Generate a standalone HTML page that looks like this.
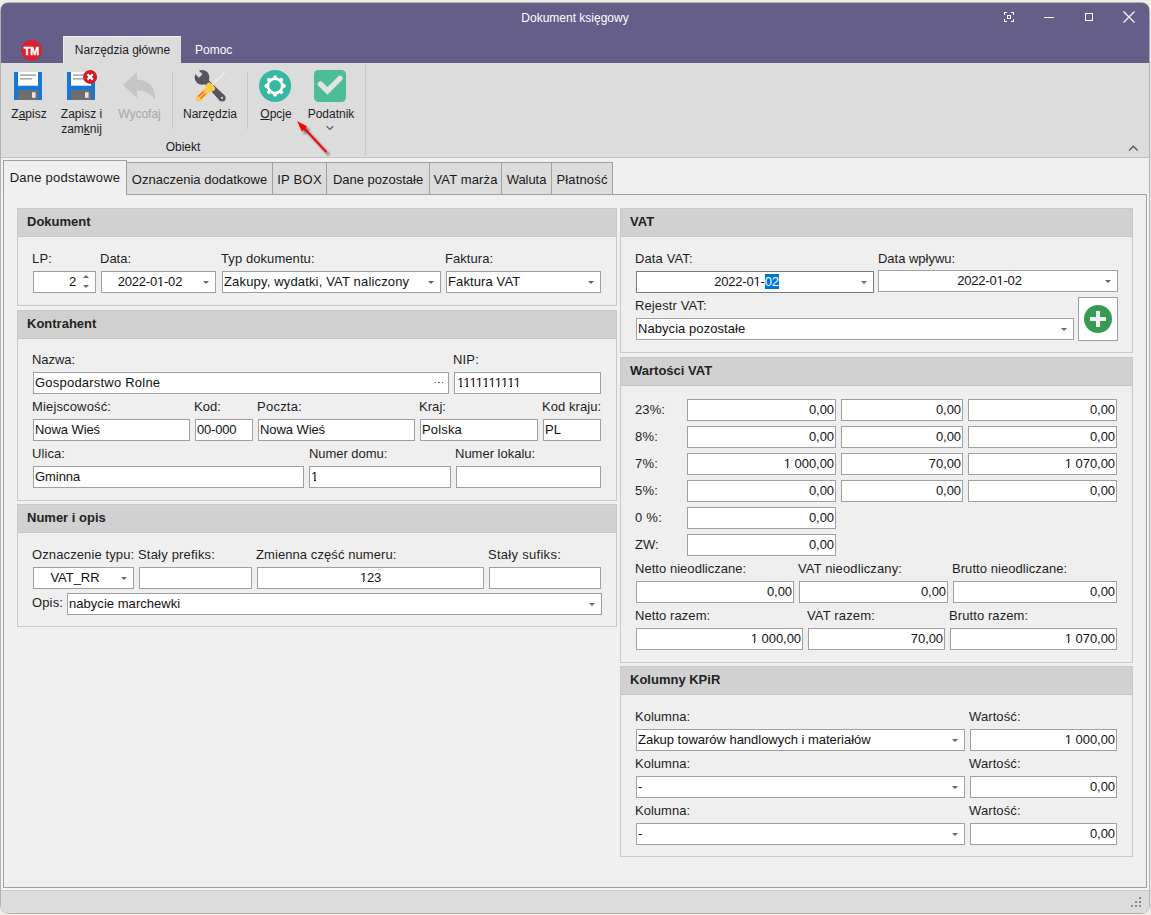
<!DOCTYPE html><html><head><meta charset="utf-8"><style>
*{margin:0;padding:0;box-sizing:border-box}
html,body{width:1151px;height:915px;overflow:hidden;background:#efede4;font-family:"Liberation Sans",sans-serif;color:#1a1a1a;position:relative}
.a{position:absolute}
.lbl{position:absolute;font-size:13px;line-height:15px;white-space:nowrap;color:#1e1e1e}
.fld{position:absolute;background:#fff;border:1px solid #a0a0a0}
.fld .t{position:absolute;top:2px;font-size:13px;line-height:15px;white-space:nowrap;color:#111}
.fld .dd{position:absolute;right:6px;top:9px;width:0;height:0;border-left:3px solid transparent;border-right:3px solid transparent;border-top:3px solid #666}
.fld .su{position:absolute;right:6px;top:3px;width:0;height:0;border-left:3px solid transparent;border-right:3px solid transparent;border-bottom:3px solid #666}
.fld .sd{position:absolute;right:6px;top:13px;width:0;height:0;border-left:3px solid transparent;border-right:3px solid transparent;border-top:3px solid #666}
.fld .dots{position:absolute;right:5px;top:9px;width:8px;height:2px;display:flex;justify-content:space-between}.fld .dots b{display:block;width:1.2px;height:1.2px;background:#555}
.o{font-style:normal;position:relative}.o::before,.o::after{content:"";position:absolute;top:10.7px;height:1.6px;background:#fff}.o::before{left:0;width:3.2px}.o::after{left:4.5px;width:3px}
.grp{position:absolute;border:1px solid #c9c9c9;background:#efefef}
.gh{position:absolute;left:0;top:0;width:100%;background:#d1d1d1;font-weight:bold;font-size:13px;line-height:15px;padding:5px 0 0 9px;color:#222;border-bottom:1px solid #c6c6c6}
.tab{position:absolute;height:33px;background:#dcdcdc;border:1px solid #a0a0a0;font-size:13px;line-height:15px;padding-top:8px;white-space:nowrap;color:#1a1a1a;text-align:center;letter-spacing:0.15px}
.rl{position:absolute;font-size:12px;line-height:14px;white-space:nowrap;color:#1c1c1c;text-align:center}
</style></head><body>
<div class="a" style="left:1150px;top:20px;width:1px;height:895px;background:#e6e6e6"></div>
<div class="a" style="left:0;top:2px;width:1150px;height:912px;background:#f0f0f0;border:1px solid #b2b2b2;border-radius:9px"></div>
<div class="a" style="left:1px;top:3px;width:1148px;height:60px;background:#655e88;border-radius:6px 6px 0 0"></div>
<div class="a" style="left:0;top:11px;width:1150px;text-align:center;color:#fff;font-size:12px;line-height:14px">Dokument księgowy</div>
<div class="a" style="left:1px;top:63px;width:1148px;height:95px;background:#dcdcdc;border-bottom:1px solid #c2c2c2"></div>
<div class="a" style="left:63px;top:36px;width:118px;height:27px;background:#dcdcdc;border-top:1px solid #ececec;border-left:1px solid #ececec"></div>
<div class="rl" style="left:63px;top:43px;width:119px">Narzędzia główne</div>
<div class="rl" style="left:195px;top:43px;color:#fff">Pomoc</div>
<div class="a" style="left:1px;top:890px;width:1148px;height:23px;background:#dcdcdc;border-top:1px solid #c8c8c8;border-radius:0 0 7px 7px"></div>
<svg class="a" style="left:0;top:0" width="1151" height="160" viewBox="0 0 1151 160"><g stroke="#fff" stroke-width="1" fill="none" shape-rendering="crispEdges"><path d="M1004.5 15V12.5H1007M1011 12.5H1013.5V15M1013.5 19V21.5H1011M1007 21.5H1004.5V19"/><rect x="1007.5" y="15.5" width="2.5" height="2.5"/><path d="M1044 17.5H1054"/><rect x="1085.5" y="13.5" width="7" height="7"/></g><path d="M1123.5 11.5L1134.5 22.5M1134.5 11.5L1123.5 22.5" stroke="#fff" stroke-width="1.1" fill="none"/><circle cx="31.5" cy="50.4" r="10.4" fill="#df1f29"/><g><rect x="14" y="72" width="28" height="28" fill="#1877d6"/><rect x="18" y="72" width="20" height="13.7" fill="#fff"/><rect x="20" y="74.3" width="16" height="1.6" fill="#a9a9a9"/><rect x="20" y="78" width="12" height="1.6" fill="#a9a9a9"/><rect x="18" y="90" width="20" height="10" fill="#6e6e6e"/><rect x="32" y="92.2" width="3.6" height="5.6" fill="#e4e4e4"/></g><g transform="translate(53,0)"><rect x="14" y="72" width="28" height="28" fill="#1877d6"/><rect x="18" y="72" width="20" height="13.7" fill="#fff"/><rect x="20" y="74.3" width="16" height="1.6" fill="#a9a9a9"/><rect x="20" y="78" width="12" height="1.6" fill="#a9a9a9"/><rect x="18" y="90" width="20" height="10" fill="#6e6e6e"/><rect x="32" y="92.2" width="3.6" height="5.6" fill="#e4e4e4"/></g><circle cx="90.1" cy="76.9" r="7" fill="#d71920"/><path d="M87.4 74.2L92.8 79.6M92.8 74.2L87.4 79.6" stroke="#fff" stroke-width="2.2"/><path d="M123 85L137 72V79.5C148 80 156 87 155 100C151 93 145 90.5 137 90.5V98Z" fill="#c6c6c6"/><rect x="172" y="72" width="1" height="57" fill="#c6c6c6"/><rect x="247" y="72" width="1" height="57" fill="#c6c6c6"/><rect x="365" y="64" width="1" height="92" fill="#c8c8c8"/><g transform="translate(185,66)"><defs><mask id="wm"><rect x="0" y="0" width="50" height="40" fill="#fff"/><rect x="-2.5" y="-13" width="5" height="11.2" fill="#000" transform="translate(17,11.3) rotate(-45)"/></mask></defs><g mask="url(#wm)" fill="#55545f"><circle cx="17" cy="11.3" r="7.4"/></g><path d="M18.8 9.5L39.6 29.4L34.6 34.4L15.2 13.1Z" fill="#55545f"/><circle cx="37.1" cy="31.9" r="3.5" fill="#55545f"/><circle cx="37" cy="31.8" r="1.1" fill="#e6e6e6"/><path d="M39.3 6.6L26.5 19.3" stroke="#e4ebee" stroke-width="1.8" stroke-linecap="round"/><path d="M24.2 19.6L27 22.4" stroke="#fbc93f" stroke-width="6" stroke-linecap="round"/><path d="M22.5 24L14 32.5" stroke="#fccb45" stroke-width="6.2" stroke-linecap="round"/><path d="M13.3 30.6L18.8 25.6M15.4 32.5L20.6 27.6" stroke="#f0534c" stroke-width="1.3"/></g><circle cx="275.1" cy="85.9" r="16" fill="#35b8a1"/><g fill="#fff"><rect x="273.3" y="75.4" width="3.6" height="3.8" rx="1.2" transform="rotate(0 275.1 85.9)"/><rect x="273.3" y="75.4" width="3.6" height="3.8" rx="1.2" transform="rotate(45 275.1 85.9)"/><rect x="273.3" y="75.4" width="3.6" height="3.8" rx="1.2" transform="rotate(90 275.1 85.9)"/><rect x="273.3" y="75.4" width="3.6" height="3.8" rx="1.2" transform="rotate(135 275.1 85.9)"/><rect x="273.3" y="75.4" width="3.6" height="3.8" rx="1.2" transform="rotate(180 275.1 85.9)"/><rect x="273.3" y="75.4" width="3.6" height="3.8" rx="1.2" transform="rotate(225 275.1 85.9)"/><rect x="273.3" y="75.4" width="3.6" height="3.8" rx="1.2" transform="rotate(270 275.1 85.9)"/><rect x="273.3" y="75.4" width="3.6" height="3.8" rx="1.2" transform="rotate(315 275.1 85.9)"/></g><circle cx="275.1" cy="85.9" r="7.2" fill="none" stroke="#fff" stroke-width="2.7"/><rect x="314" y="70" width="32" height="32" rx="4.5" fill="#4dbd95"/><path d="M320.4 84L327.4 91L340 78.4" stroke="#e2e2e2" stroke-width="5.4" fill="none" stroke-linecap="round" stroke-linejoin="miter"/><path d="M326.6 126.3L329.9 129.4L333.2 126.3" stroke="#5b5b6c" stroke-width="1.2" fill="none"/><path d="M1129 150.5L1133.3 146.2L1137.6 150.5" stroke="#555" stroke-width="1.3" fill="none"/></svg>
<div class="a" style="left:21px;top:45px;width:21px;text-align:center;color:#fff;font-weight:bold;font-size:10.8px;line-height:12px;-webkit-text-stroke:0.35px #fff">TM</div>
<div class="rl" style="left:9px;top:107px;width:40px;line-height:15px">Z<u>a</u>pisz</div>
<div class="rl" style="left:59px;top:107px;width:45px;line-height:15px">Zapisz i<br>zam<u>k</u>nij</div>
<div class="rl" style="left:117px;top:107px;width:45px;color:#a8a8a8">Wycofaj</div>
<div class="rl" style="left:180px;top:107px;width:60px">Narzędzia</div>
<div class="rl" style="left:256px;top:107px;width:40px"><u>O</u>pcje</div>
<div class="rl" style="left:303px;top:107px;width:56px">Podatnik</div>
<div class="rl" style="left:155px;top:140px;width:56px">Obiekt</div>
<svg class="a" style="left:280px;top:110px" width="70" height="60" viewBox="280 110 70 60"><defs><filter id="sh" x="-50%" y="-50%" width="200%" height="200%"><feGaussianBlur stdDeviation="1.2"/></filter></defs><g filter="url(#sh)" opacity="0.6"><path d="M305 129L329 155" stroke="#333" stroke-width="2.4"/><path d="M300 124L310 129.6L304.8 134.5Z" fill="#333"/></g><path d="M303 127L326.4 152.1" stroke="#ff0000" stroke-width="2"/><path d="M297.1 121.1L307.2 126.6L301.8 131.5Z" fill="#ff0000"/></svg>
<svg class="a" style="left:1125px;top:893px" width="20" height="18" viewBox="1125 893 20 18" shape-rendering="crispEdges" fill="#8a8a8a"><rect x="1139" y="897" width="2" height="2"/><rect x="1135" y="901" width="2" height="2"/><rect x="1139" y="901" width="2" height="2"/><rect x="1131" y="905" width="2" height="2"/><rect x="1135" y="905" width="2" height="2"/><rect x="1139" y="905" width="2" height="2"/></svg>
<div class="a" style="left:1px;top:194px;width:1148px;height:696px;background:#f6f6f6"></div>
<div class="a" style="left:3px;top:194px;width:1144px;height:694px;border:1px solid #a0a0a0;background:#f0f0f0"></div>
<div class="tab" style="left:3px;top:160px;width:124px;height:35px;background:#f0f0f0;border-color:#a0a0a0;border-bottom:none;padding-top:9px;letter-spacing:0.25px">Dane podstawowe</div>
<div class="tab" style="left:127px;top:162px;width:146px;height:32px;border-left:none;border-bottom:none;padding-top:9px;letter-spacing:0.010px;">Oznaczenia dodatkowe</div>
<div class="tab" style="left:273px;top:162px;width:54px;height:32px;border-left:none;border-bottom:none;padding-top:9px;letter-spacing:0.267px;">IP BOX</div>
<div class="tab" style="left:327px;top:162px;width:103px;height:32px;border-left:none;border-bottom:none;padding-top:9px;letter-spacing:-0.007px;">Dane pozostałe</div>
<div class="tab" style="left:430px;top:162px;width:72px;height:32px;border-left:none;border-bottom:none;padding-top:9px;letter-spacing:0.126px;">VAT marża</div>
<div class="tab" style="left:502px;top:162px;width:50px;height:32px;border-left:none;border-bottom:none;padding-top:9px;letter-spacing:-0.065px;">Waluta</div>
<div class="tab" style="left:552px;top:162px;width:61px;height:32px;border-left:none;border-bottom:none;padding-top:9px;letter-spacing:0.150px;">Płatność</div>
<div class="grp" style="left:17px;top:208px;width:600px;height:98px"><div class="gh" style="height:28px">Dokument</div></div>
<div class="lbl" style="left:32px;top:251px;letter-spacing:0.167px;">LP:</div>
<div class="lbl" style="left:100px;top:251px;letter-spacing:0.000px;">Data:</div>
<div class="lbl" style="left:221px;top:251px;letter-spacing:0.079px;">Typ dokumentu:</div>
<div class="lbl" style="left:445px;top:251px;letter-spacing:0.062px;">Faktura:</div>
<div class="fld " style="left:33px;top:271px;width:63px;height:22px;"><span class="t" style="right:19px;letter-spacing:-0.200px;">2</span><i class="su"></i><i class="sd"></i></div>
<div class="fld " style="left:101px;top:271px;width:115px;height:22px;"><span class="t" style="left:0;right:17px;text-align:center;letter-spacing:-0.220px;">2022-0<i class="o">1</i>-02</span><i class="dd"></i></div>
<div class="fld " style="left:222px;top:271px;width:219px;height:22px;"><span class="t" style="left:1px;letter-spacing:0.162px;">Zakupy, wydatki, VAT naliczony</span><i class="dd"></i></div>
<div class="fld " style="left:446px;top:271px;width:155px;height:22px;"><span class="t" style="left:1px;letter-spacing:0.112px;">Faktura VAT</span><i class="dd"></i></div>
<div class="grp" style="left:17px;top:310px;width:600px;height:191px"><div class="gh" style="height:28px">Kontrahent</div></div>
<div class="lbl" style="left:32px;top:352px;letter-spacing:-0.050px;">Nazwa:</div>
<div class="lbl" style="left:453px;top:352px;letter-spacing:0.175px;">NIP:</div>
<div class="fld " style="left:33px;top:372px;width:416px;height:22px;"><span class="t" style="left:1px;letter-spacing:0.217px;">Gospodarstwo Rolne</span><i class="dots"><b></b><b></b><b></b></i></div>
<div class="fld " style="left:454px;top:372px;width:147px;height:22px;"><span class="t" style="left:2px;letter-spacing:-0.95px;"><i class="o">1</i><i class="o">1</i><i class="o">1</i><i class="o">1</i><i class="o">1</i><i class="o">1</i><i class="o">1</i><i class="o">1</i><i class="o">1</i><i class="o">1</i></span></div>
<div class="lbl" style="left:32px;top:399px;letter-spacing:0.150px;">Miejscowość:</div>
<div class="lbl" style="left:194px;top:399px;letter-spacing:0.075px;">Kod:</div>
<div class="lbl" style="left:257px;top:399px;letter-spacing:0.243px;">Poczta:</div>
<div class="lbl" style="left:419px;top:399px;letter-spacing:0.060px;">Kraj:</div>
<div class="lbl" style="left:542px;top:399px;letter-spacing:0.060px;">Kod kraju:</div>
<div class="fld " style="left:33px;top:419px;width:157px;height:22px;"><span class="t" style="left:1px;letter-spacing:-0.078px;">Nowa Wieś</span></div>
<div class="fld " style="left:195px;top:419px;width:58px;height:22px;"><span class="t" style="left:1px;letter-spacing:-0.217px;">00-000</span></div>
<div class="fld " style="left:258px;top:419px;width:157px;height:22px;"><span class="t" style="left:1px;letter-spacing:-0.078px;">Nowa Wieś</span></div>
<div class="fld " style="left:420px;top:419px;width:118px;height:22px;"><span class="t" style="left:1px;letter-spacing:0.167px;">Polska</span></div>
<div class="fld " style="left:543px;top:419px;width:58px;height:22px;"><span class="t" style="left:1px;letter-spacing:0.050px;">PL</span></div>
<div class="lbl" style="left:32px;top:446px;letter-spacing:0.083px;">Ulica:</div>
<div class="lbl" style="left:309px;top:446px;letter-spacing:-0.045px;">Numer domu:</div>
<div class="lbl" style="left:455px;top:446px;letter-spacing:0.000px;">Numer lokalu:</div>
<div class="fld " style="left:33px;top:466px;width:271px;height:22px;"><span class="t" style="left:1px;letter-spacing:-0.067px;">Gminna</span></div>
<div class="fld " style="left:309px;top:466px;width:142px;height:22px;"><span class="t" style="left:1px;letter-spacing:-0.200px;"><i class="o">1</i></span></div>
<div class="fld " style="left:456px;top:466px;width:145px;height:22px;"></div>
<div class="grp" style="left:17px;top:504px;width:600px;height:123px"><div class="gh" style="height:28px">Numer i opis</div></div>
<div class="lbl" style="left:32px;top:547px;letter-spacing:0.112px;">Oznaczenie typu:</div>
<div class="lbl" style="left:138px;top:547px;letter-spacing:0.193px;">Stały prefiks:</div>
<div class="lbl" style="left:256px;top:547px;letter-spacing:0.081px;">Zmienna część numeru:</div>
<div class="lbl" style="left:488px;top:547px;letter-spacing:0.285px;">Stały sufiks:</div>
<div class="fld " style="left:33px;top:567px;width:101px;height:22px;"><span class="t" style="left:0;right:17px;text-align:center;letter-spacing:-0.045px;">VAT_RR</span><i class="dd"></i></div>
<div class="fld " style="left:139px;top:567px;width:113px;height:22px;"></div>
<div class="fld " style="left:257px;top:567px;width:227px;height:22px;"><span class="t" style="left:0;right:0px;text-align:center;letter-spacing:-0.200px;"><i class="o">1</i>23</span></div>
<div class="fld " style="left:489px;top:567px;width:112px;height:22px;"></div>
<div class="lbl" style="left:32px;top:595px;letter-spacing:0.140px;">Opis:</div>
<div class="fld " style="left:67px;top:593px;width:535px;height:22px;"><span class="t" style="left:1px;letter-spacing:0.041px;">nabycie marchewki</span><i class="dd"></i></div>
<div class="grp" style="left:620px;top:208px;width:513px;height:145px"><div class="gh" style="height:28px">VAT</div></div>
<div class="lbl" style="left:635px;top:251px;letter-spacing:0.126px;">Data VAT:</div>
<div class="lbl" style="left:878px;top:251px;letter-spacing:-0.017px;">Data wpływu:</div>
<div class="fld " style="left:636px;top:271px;width:238px;height:22px;border-color:#7a7a7a"><span class="t" style="left:0;right:17px;text-align:center;letter-spacing:-0.220px;">2022-0<i class="o">1</i>-<span style="background:#0078d7;color:#fff">02</span></span><i class="dd"></i></div>
<div class="fld " style="left:878px;top:270px;width:240px;height:22px;"><span class="t" style="left:0;right:17px;text-align:center;letter-spacing:-0.220px;">2022-0<i class="o">1</i>-02</span><i class="dd"></i></div>
<div class="lbl" style="left:635px;top:298px;letter-spacing:0.120px;">Rejestr VAT:</div>
<div class="fld " style="left:636px;top:318px;width:438px;height:22px;"><span class="t" style="left:1px;letter-spacing:0.059px;">Nabycia pozostałe</span><i class="dd"></i></div>
<div class="a" style="left:1078px;top:297px;width:40px;height:44px;border:1px solid #a0a0a0;background:#fff"></div>
<div class="a" style="left:1084px;top:304.7px;width:28px;height:28px;border-radius:50%;background:#359a52"></div>
<div class="a" style="left:1090px;top:316.8px;width:16px;height:4.4px;background:#f0f0f0"></div>
<div class="a" style="left:1096px;top:310.8px;width:4px;height:16px;background:#f0f0f0"></div>
<div class="grp" style="left:620px;top:357px;width:513px;height:306px"><div class="gh" style="height:28px">Wartości VAT</div></div>
<div class="lbl" style="left:635px;top:402px;letter-spacing:0.100px;">23%:</div>
<div class="fld num" style="left:687px;top:399px;width:149px;height:22px;"><span class="t" style="right:1px;letter-spacing:-0.050px;">0,00</span></div>
<div class="fld num" style="left:841px;top:399px;width:122px;height:22px;"><span class="t" style="right:1px;letter-spacing:-0.050px;">0,00</span></div>
<div class="fld num" style="left:968px;top:399px;width:149px;height:22px;"><span class="t" style="right:1px;letter-spacing:-0.050px;">0,00</span></div>
<div class="lbl" style="left:635px;top:429px;letter-spacing:0.200px;">8%:</div>
<div class="fld num" style="left:687px;top:426px;width:149px;height:22px;"><span class="t" style="right:1px;letter-spacing:-0.050px;">0,00</span></div>
<div class="fld num" style="left:841px;top:426px;width:122px;height:22px;"><span class="t" style="right:1px;letter-spacing:-0.050px;">0,00</span></div>
<div class="fld num" style="left:968px;top:426px;width:149px;height:22px;"><span class="t" style="right:1px;letter-spacing:-0.050px;">0,00</span></div>
<div class="lbl" style="left:635px;top:456px;letter-spacing:0.200px;">7%:</div>
<div class="fld num" style="left:687px;top:453px;width:149px;height:22px;"><span class="t" style="right:1px;letter-spacing:-0.050px;"><i class="o">1</i> 000,00</span></div>
<div class="fld num" style="left:841px;top:453px;width:122px;height:22px;"><span class="t" style="right:1px;letter-spacing:-0.080px;">70,00</span></div>
<div class="fld num" style="left:968px;top:453px;width:149px;height:22px;"><span class="t" style="right:1px;letter-spacing:-0.050px;"><i class="o">1</i> 070,00</span></div>
<div class="lbl" style="left:635px;top:483px;letter-spacing:0.200px;">5%:</div>
<div class="fld num" style="left:687px;top:480px;width:149px;height:22px;"><span class="t" style="right:1px;letter-spacing:-0.050px;">0,00</span></div>
<div class="fld num" style="left:841px;top:480px;width:122px;height:22px;"><span class="t" style="right:1px;letter-spacing:-0.050px;">0,00</span></div>
<div class="fld num" style="left:968px;top:480px;width:149px;height:22px;"><span class="t" style="right:1px;letter-spacing:-0.050px;">0,00</span></div>
<div class="lbl" style="left:635px;top:510px;letter-spacing:0.250px;">0 %:</div>
<div class="fld num" style="left:687px;top:507px;width:149px;height:22px;"><span class="t" style="right:1px;letter-spacing:-0.050px;">0,00</span></div>
<div class="lbl" style="left:635px;top:537px;letter-spacing:0.068px;">ZW:</div>
<div class="fld num" style="left:687px;top:534px;width:149px;height:22px;"><span class="t" style="right:1px;letter-spacing:-0.050px;">0,00</span></div>
<div class="lbl" style="left:635px;top:561px;letter-spacing:0.037px;">Netto nieodliczane:</div>
<div class="lbl" style="left:798px;top:561px;letter-spacing:0.126px;">VAT nieodliczany:</div>
<div class="lbl" style="left:952px;top:561px;letter-spacing:0.055px;">Brutto nieodliczane:</div>
<div class="fld num" style="left:636px;top:581px;width:158px;height:22px;"><span class="t" style="right:1px;letter-spacing:-0.050px;">0,00</span></div>
<div class="fld num" style="left:799px;top:581px;width:149px;height:22px;"><span class="t" style="right:1px;letter-spacing:-0.050px;">0,00</span></div>
<div class="fld num" style="left:953px;top:581px;width:164px;height:22px;"><span class="t" style="right:1px;letter-spacing:-0.050px;">0,00</span></div>
<div class="lbl" style="left:635px;top:608px;letter-spacing:0.067px;">Netto razem:</div>
<div class="lbl" style="left:807px;top:608px;letter-spacing:0.153px;">VAT razem:</div>
<div class="lbl" style="left:949px;top:608px;letter-spacing:0.092px;">Brutto razem:</div>
<div class="fld num" style="left:636px;top:628px;width:167px;height:22px;"><span class="t" style="right:1px;letter-spacing:-0.050px;"><i class="o">1</i> 000,00</span></div>
<div class="fld num" style="left:808px;top:628px;width:137px;height:22px;"><span class="t" style="right:1px;letter-spacing:-0.080px;">70,00</span></div>
<div class="fld num" style="left:950px;top:628px;width:167px;height:22px;"><span class="t" style="right:1px;letter-spacing:-0.050px;"><i class="o">1</i> 070,00</span></div>
<div class="grp" style="left:620px;top:666px;width:513px;height:191px"><div class="gh" style="height:28px">Kolumny KPiR</div></div>
<div class="lbl" style="left:635px;top:709px;letter-spacing:0.025px;">Kolumna:</div>
<div class="lbl" style="left:969px;top:709px;letter-spacing:0.101px;">Wartość:</div>
<div class="fld " style="left:636px;top:729px;width:329px;height:22px;"><span class="t" style="left:1px;letter-spacing:-0.022px;">Zakup towarów handlowych i materiałów</span><i class="dd"></i></div>
<div class="fld num" style="left:970px;top:729px;width:147px;height:22px;"><span class="t" style="right:1px;letter-spacing:-0.050px;"><i class="o">1</i> 000,00</span></div>
<div class="lbl" style="left:635px;top:756px;letter-spacing:0.025px;">Kolumna:</div>
<div class="lbl" style="left:969px;top:756px;letter-spacing:0.101px;">Wartość:</div>
<div class="fld " style="left:636px;top:776px;width:329px;height:22px;"><span class="t" style="left:1px;letter-spacing:-0.300px;">-</span><i class="dd"></i></div>
<div class="fld num" style="left:970px;top:776px;width:147px;height:22px;"><span class="t" style="right:1px;letter-spacing:-0.050px;">0,00</span></div>
<div class="lbl" style="left:635px;top:803px;letter-spacing:0.025px;">Kolumna:</div>
<div class="lbl" style="left:969px;top:803px;letter-spacing:0.101px;">Wartość:</div>
<div class="fld " style="left:636px;top:823px;width:329px;height:22px;"><span class="t" style="left:1px;letter-spacing:-0.300px;">-</span><i class="dd"></i></div>
<div class="fld num" style="left:970px;top:823px;width:147px;height:22px;"><span class="t" style="right:1px;letter-spacing:-0.050px;">0,00</span></div>
</body></html>
